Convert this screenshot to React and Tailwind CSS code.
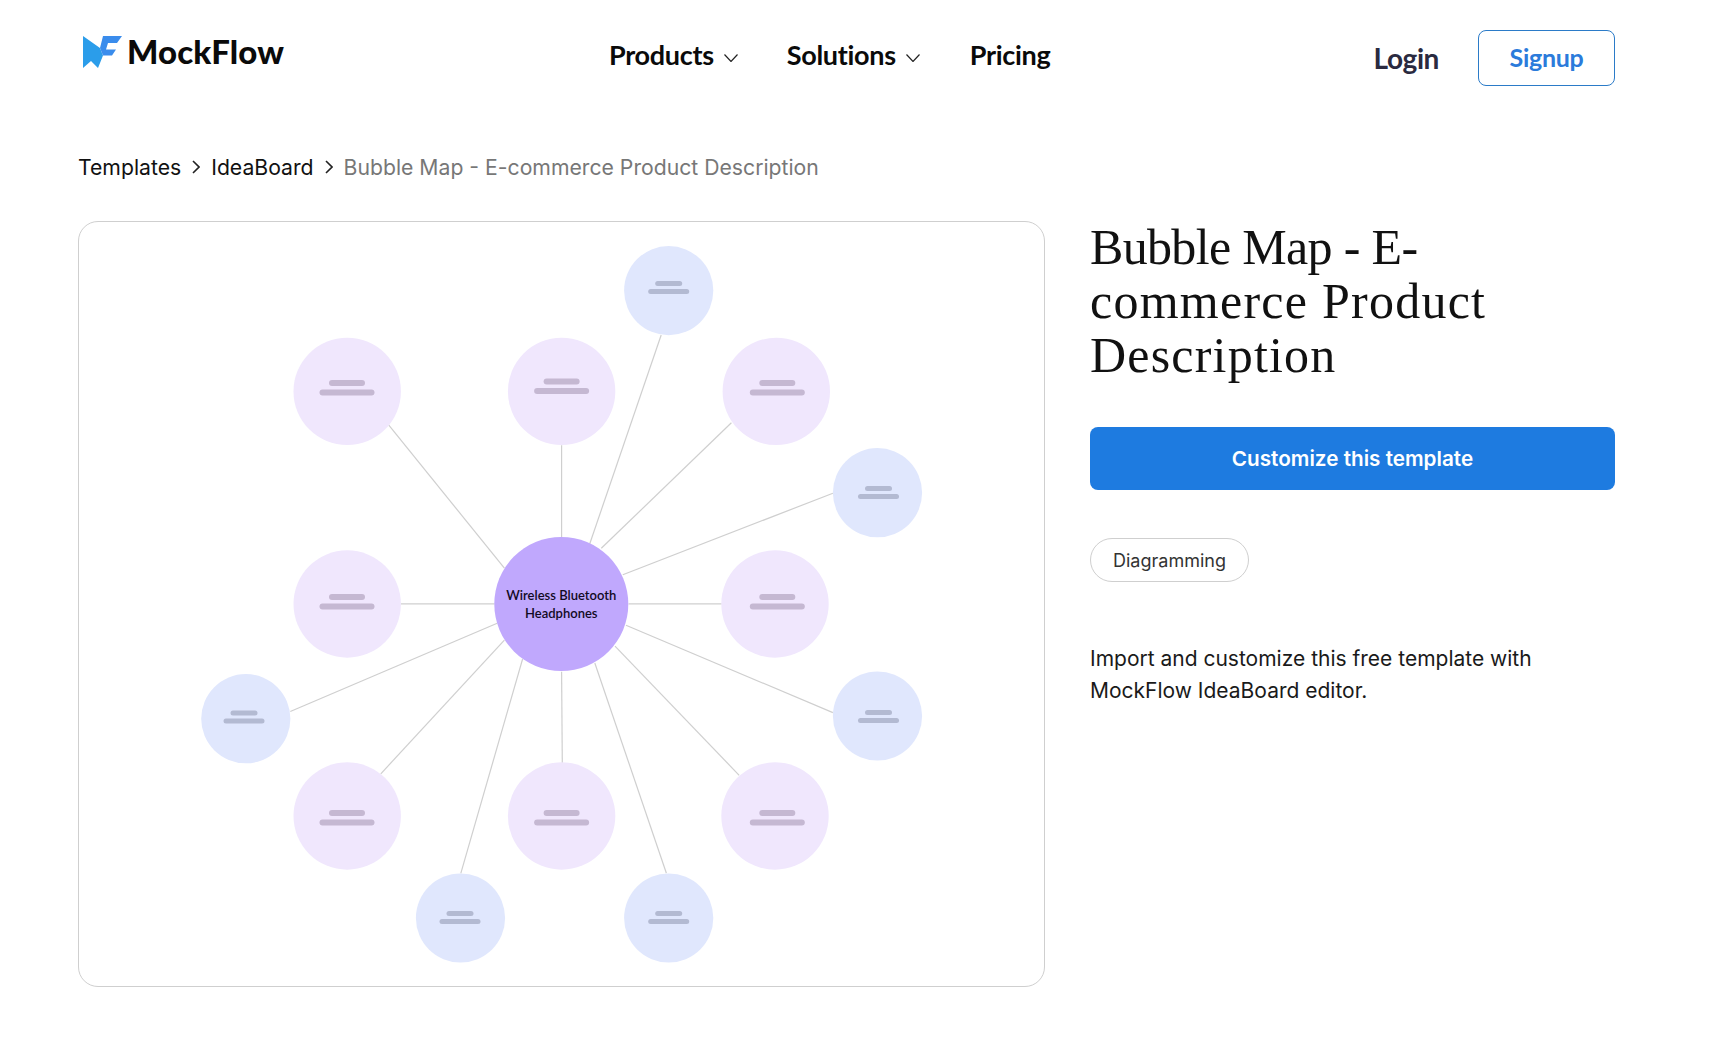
const purple = [
  { c: [347.2, 391.4], b: [347, 380] },
  { c: [561.6, 391.4], b: [561.6, 378.5] },
  { c: [776.3, 391.4], b: [777.3, 380] },
  { c: [347.2, 604], b: [347, 594] },
  { c: [775, 604], b: [777.3, 594] },
  { c: [347.2, 816], b: [347, 810] },
  { c: [561.6, 816], b: [561.6, 810] },
  { c: [775, 816], b: [777.3, 810] },
];
const blue = [
  { c: [668.7, 290.6], b: [668.7, 281] },
  { c: [877.5, 492.7], b: [878.5, 486] },
  { c: [877.5, 716], b: [878.5, 710] },
  { c: [668.7, 918], b: [668.7, 911] },
  { c: [460.5, 918], b: [460, 911] },
  { c: [245.8, 718.7], b: [244, 710.5] },
];
const lines = [
  [388.6, 424.8, 504.4, 568.2],
  [561.6, 445.2, 561.6, 537.5],
  [661.2, 335, 589.6, 544.2],
  [731.4, 422.8, 601.3, 548.3],
  [832.9, 493.2, 622.8, 574.8],
  [400.9, 603.9, 494.6, 603.9],
  [628.6, 603.9, 721.7, 603.9],
  [626, 625.3, 832.9, 712.6],
  [615, 646.2, 739.2, 775.3],
  [594.8, 663, 666.4, 873.3],
  [561.6, 671.7, 562.3, 763],
  [522.6, 659, 460.8, 873.3],
  [504.4, 640.1, 380.8, 773.8],
  [497.2, 623.3, 290.3, 711.5],
];

function Chevron({ className }) {
  return (
    <svg viewBox="0 0 14 8" className={className} fill="none" stroke="#222" strokeWidth="1.2">
      <path d="M0.5 0.5 L7 7.5 L13.5 0.5" />
    </svg>
  );
}

function Crumb() {
  return (
    <svg viewBox="0 0 8 14" className="w-2 h-3.5 mx-[11px]" fill="none" stroke="#222" strokeWidth="1.6">
      <path d="M1 1 L7 7 L1 13" />
    </svg>
  );
}

function Logo() {
  return (
    <svg viewBox="0 0 39 33" className="w-[39px] h-[33px]">
      <path d="M0 1 L17 13 L20 20.5 L15 33 L8 26 L0 33 Z" fill="#2b9dea" />
      <path d="M17 13 L20 1 L39 1 L34 8 L25 8 L23 14.5 L33 14.5 L29 20.5 L20 20.5 Z" fill="#3a8cec" />
    </svg>
  );
}

export default function App() {
  return (
    <div className="min-h-[1043px] bg-white font-['Inter',sans-serif] text-[#111]">
      <header className="flex items-start h-[112px] pl-[83px] pr-[99px] pt-[30px]">
        <div className="flex items-center gap-[5px] h-[39px] w-[526px] mt-[2px]">
          <Logo />
          <span className="font-['Lato',sans-serif] font-black text-[33px] leading-none text-[#0a0a0a] tracking-[0.1px]">MockFlow</span>
        </div>
        <nav className="flex items-center h-[50px] font-['Lato',sans-serif] font-bold text-[27px] tracking-[-0.3px] text-[#0a0a0a]">
          <span>Products</span>
          <Chevron className="w-[14px] h-2 ml-[10px] mr-[49px] mt-[6px]" />
          <span>Solutions</span>
          <Chevron className="w-[14px] h-2 ml-[10px] mr-[50px] mt-[6px]" />
          <span>Pricing</span>
        </nav>
        <div className="flex items-center ml-auto gap-[39px]">
          <span className="font-['Lato',sans-serif] font-bold text-[28px] tracking-[-0.4px] text-[#2a2a40]">Login</span>
          <button className="w-[137px] h-[56px] rounded-lg border-[1.5px] border-[#2b7bc8] bg-white font-['Lato',sans-serif] font-bold text-[25px] tracking-[-0.3px] text-[#2b7bdb]">Signup</button>
        </div>
      </header>
      <main className="pl-[78px] pr-[99px]">
        <div className="flex items-center h-[30px] mt-[40px] text-[21.2px] leading-[30px]">
          <span>Templates</span>
          <Crumb />
          <span>IdeaBoard</span>
          <Crumb />
          <span className="text-[#777]">Bubble Map - E-commerce Product Description</span>
        </div>
        <div className="flex items-start mt-[39px] gap-[45px]">
          <div className="w-[967px] h-[766px] shrink-0 rounded-[20px] border border-[#cfcfcf] overflow-hidden">
            <svg viewBox="79 222 965 764" className="w-full h-full block">
              {lines.map((l, i) => (
                <line key={i} x1={l[0]} y1={l[1]} x2={l[2]} y2={l[3]} stroke="#cfcfcf" strokeWidth="1.2" />
              ))}
              {purple.map((n, i) => (
                <g key={i}>
                  <circle cx={n.c[0]} cy={n.c[1]} r="53.7" fill="#f0e7fd" />
                  <rect x={n.b[0] - 18} y={n.b[1]} width="36" height="6" rx="3" fill="#c5b8d2" />
                  <rect x={n.b[0] - 27.5} y={n.b[1] + 9.5} width="55" height="6" rx="3" fill="#c5b8d2" />
                </g>
              ))}
              {blue.map((n, i) => (
                <g key={i}>
                  <circle cx={n.c[0]} cy={n.c[1]} r="44.6" fill="#e0e7fd" />
                  <rect x={n.b[0] - 13.5} y={n.b[1]} width="27" height="5" rx="2.5" fill="#b3bad2" />
                  <rect x={n.b[0] - 20.5} y={n.b[1] + 8} width="41" height="5" rx="2.5" fill="#b3bad2" />
                </g>
              ))}
              <circle cx="561.3" cy="604" r="67" fill="#c0a8fd" />
              <text x="561.3" y="600" textAnchor="middle" fontFamily="Lato, sans-serif" fontSize="13" fontWeight="600" fill="#120a24">Wireless Bluetooth</text>
              <text x="561.3" y="618" textAnchor="middle" fontFamily="Lato, sans-serif" fontSize="13" fontWeight="600" fill="#120a24">Headphones</text>
            </svg>
          </div>
          <div className="w-[525px] -mt-px">
            <h1 className="font-['Liberation_Serif',serif] font-normal text-[50px] leading-[54px] text-[#111] mb-[45px]">
              <span className="tracking-[-0.67px]">Bubble Map - E-</span><br />
              <span className="tracking-[1.25px]">commerce Product</span><br />
              <span className="tracking-[1.2px]">Description</span>
            </h1>
            <button className="w-full h-[63px] rounded-lg bg-[#1e7be0] text-white text-[20.7px] font-semibold">Customize this template</button>
            <div className="mt-12">
              <span className="inline-flex items-center justify-center w-[159px] h-[44px] rounded-full border border-[#cfcfcf] text-[18px] text-[#333]">Diagramming</span>
            </div>
            <p className="mt-[61px] text-[21px] leading-[32px] text-[#1a1a1a]">
              Import and customize this free template with<br />MockFlow IdeaBoard editor.
            </p>
          </div>
        </div>
      </main>
    </div>
  );
}
